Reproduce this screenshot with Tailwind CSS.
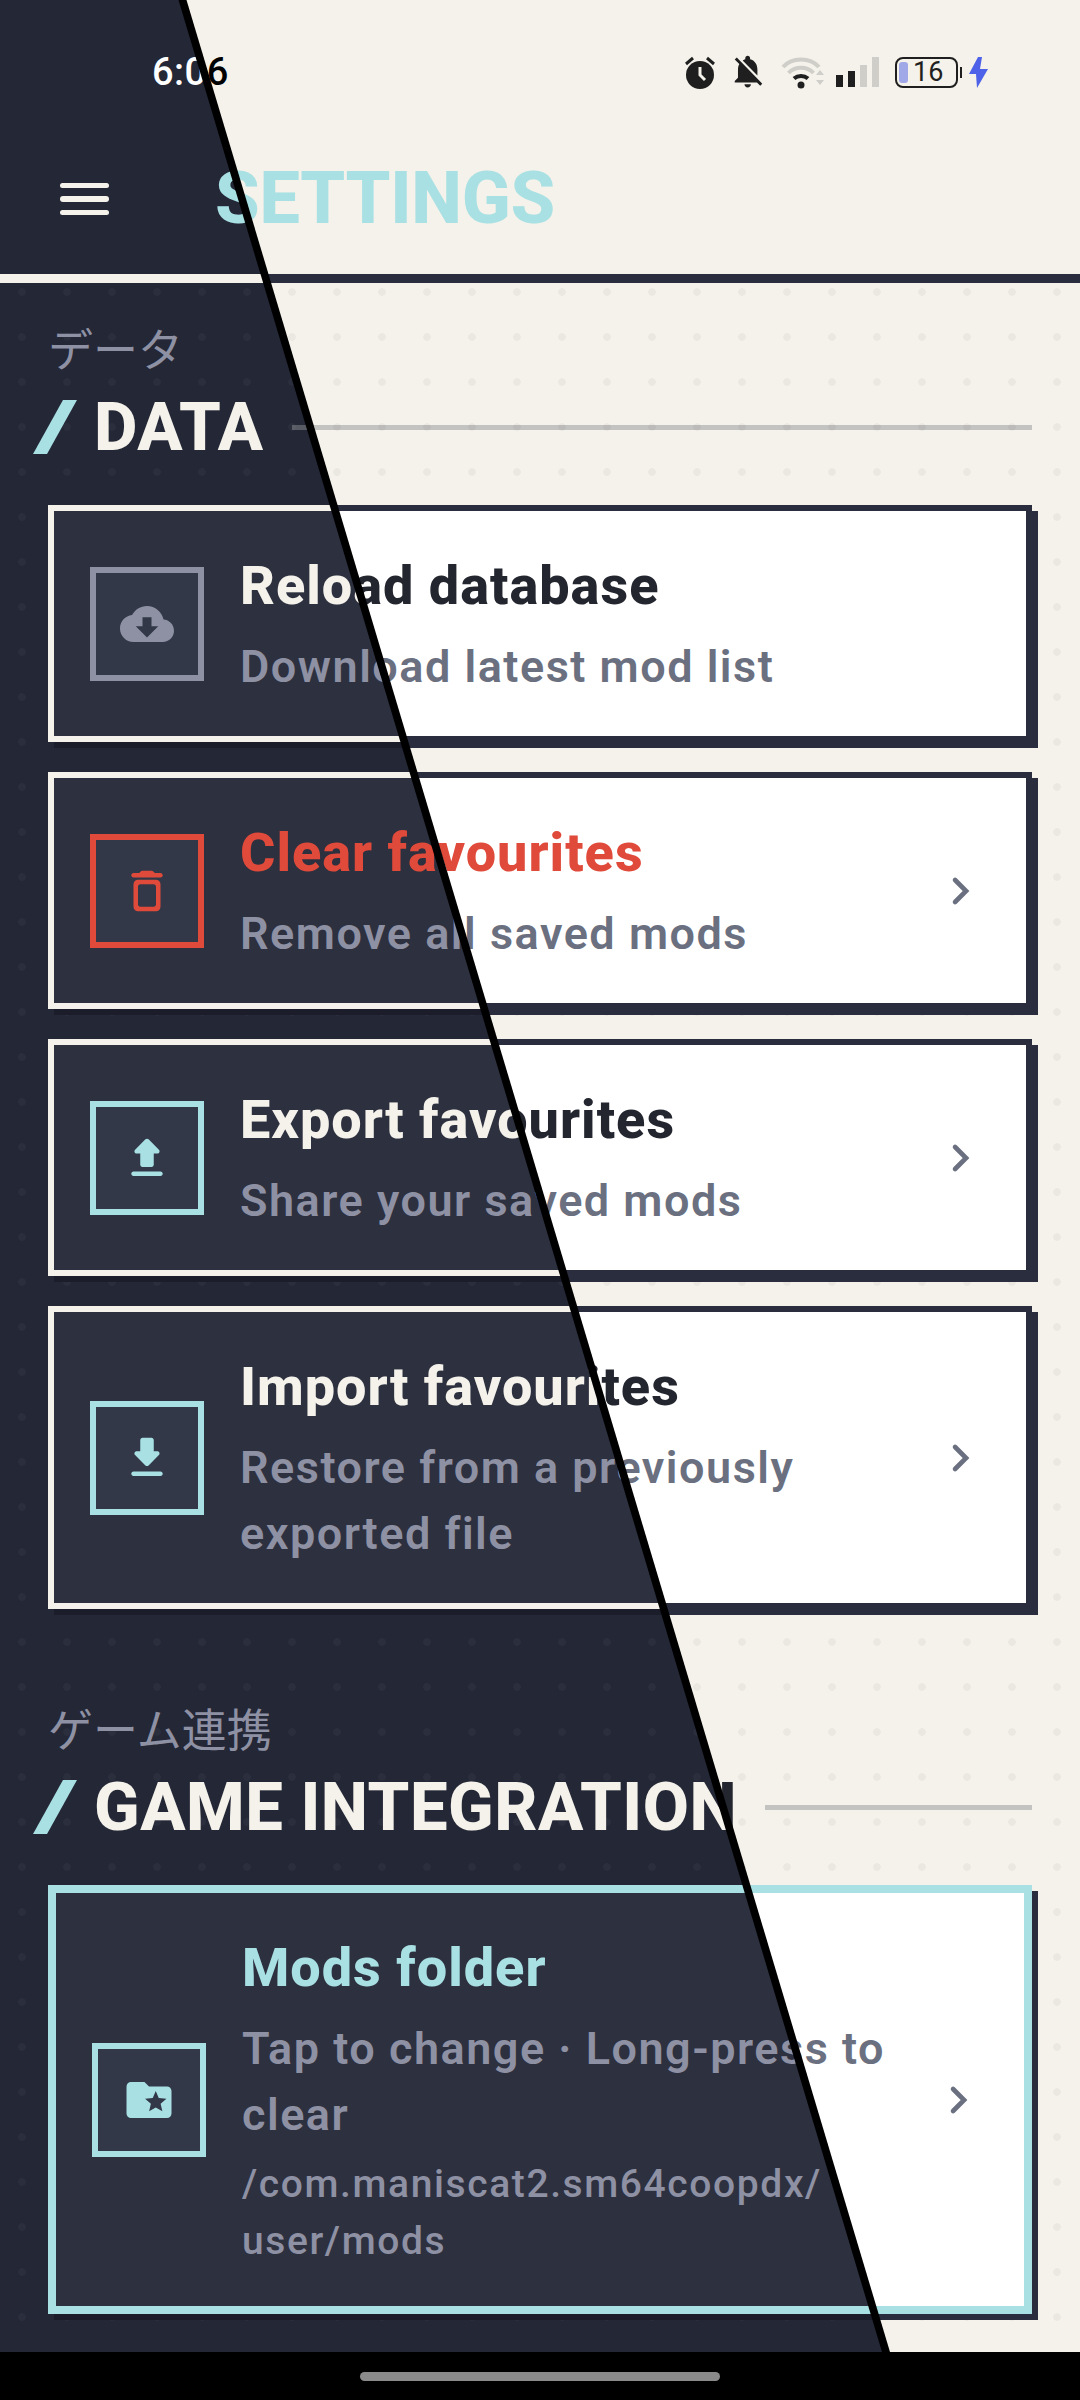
<!DOCTYPE html>
<html lang="en">
  <head>
    <meta charset="UTF-8" />
    <meta name="viewport" content="width=device-width, initial-scale=1.0" />
    <title>Settings</title>
    <script src="https://cdn.jsdelivr.net/npm/@tailwindcss/browser@4"></script>
  </head>
  <body class="bg-black">
    <div class="flex h-[2400px] w-[1080px] flex-col overflow-hidden [font-family:Roboto,'Noto_Sans_CJK_JP',sans-serif]">
      <div class="relative h-[2352px] w-full overflow-hidden">
        <!-- both themes get the same screen, the dark one is cut along the wipe -->
        <div
          data-screen
          class="absolute inset-0 [--page:#f4f2ea] [--dot:#eae8e1] [--card:#ffffff] [--edge:#2a2d3e] [--shadow:#2a2d3e] [--ink:#23262f] [--sub:#6b7080] [--box:#f4f2ea] [--rule:#2a2d3e3d] [--status:#000000]"
        ></div>
        <div
          data-screen
          class="absolute inset-0 [clip-path:polygon(0_0,182.5px_0,886px_2352px,0_2352px)] [--page:#242736] [--dot:#2b2e3d] [--card:#2d303f] [--edge:#f4f2ea] [--shadow:#1b1d2b] [--ink:#f4f2ea] [--sub:#8e91a3] [--box:#323848] [--rule:#f4f2ea40] [--status:#ffffff]"
        ></div>
        <!-- wipe edge -->
        <svg class="absolute inset-0" width="1080" height="2352" viewBox="0 0 1080 2352">
          <polygon points="178.5,0 186.5,0 890,2352 882,2352" fill="#000" />
        </svg>
      </div>
      <!-- gesture bar -->
      <div class="flex h-12 items-center justify-center bg-black">
        <div class="h-[9px] w-[360px] rounded-full bg-[#8a8a8a]"></div>
      </div>
    </div>

    <template id="screen">
      <div class="flex h-full flex-col bg-[var(--page)]">
        <header class="h-[283px] shrink-0 border-b-[9px] border-[var(--edge)]">
          <div class="flex h-[124px] items-start justify-between pt-[50px] pr-[92px] pl-[152px] text-[var(--status)]">
            <span class="text-[38px] leading-[44px] font-medium tracking-[0.5px]">6:06</span>
            <div class="mt-[5px] flex items-center text-[#1f1f1f]">
              <svg width="32" height="33" viewBox="0 0 32 33">
                <circle cx="16" cy="19" r="14" fill="currentColor" />
                <path d="M16 11v8l5 5" fill="none" stroke="#f4f2ea" stroke-width="3" />
                <path d="M2 8l7-6M30 8l-7-6" fill="none" stroke="currentColor" stroke-width="3" />
              </svg>
              <svg class="ml-[17px]" width="31" height="34" viewBox="3.500 2 18 21" fill="currentColor">
                <path d="M20 18.69L7.84 6.14 5.27 3.49 4 4.76l2.8 2.8v.01c-.52.99-.8 2.16-.8 3.42v5l-2 2v1h13.73l2 2L21 19.72l-1-1.03zM12 22c1.11 0 2-.89 2-2h-4c0 1.11.89 2 2 2zm6-7.32V11c0-3.08-1.64-5.64-4.5-6.32V4c0-.83-.67-1.5-1.5-1.5s-1.5.67-1.5 1.5v.68c-.15.03-.29.08-.42.12-.1.03-.2.07-.3.11h-.01c-.2.08-.4.18-.59.28-.1.05-.2.11-.3.17L18 14.68z" />
              </svg>
              <svg class="ml-[17px]" width="43" height="33" viewBox="0 0 43 33" fill="none">
                <path d="M2 11C11 1 29 1 38 11" stroke="#cfcec8" stroke-width="4" />
                <path d="M7.5 17C14 10 26 10 32.5 17" stroke="#cfcec8" stroke-width="4" />
                <path d="M13 22.500C17 19 23 19 27 22.500" stroke="currentColor" stroke-width="4" />
                <circle cx="20" cy="29" r="3.500" fill="currentColor" />
                <path d="M35 19l4-5 4 5zM35 24l4 5 4-5z" fill="#cfcec8" />
              </svg>
              <div class="ml-[12px] flex h-[30px] items-end gap-[5px]">
                <div class="h-[12px] w-[7px] bg-current"></div>
                <div class="h-[16px] w-[7px] bg-current"></div>
                <div class="h-[22px] w-[7px] bg-[#cfcec8]"></div>
                <div class="h-[30px] w-[7px] bg-[#cfcec8]"></div>
              </div>
              <div class="ml-[16px] flex h-[31px] w-[63px] items-center gap-[5px] rounded-[8px] border-[2.5px] border-current px-[2px]">
                <div class="h-[21px] w-[9px] rounded-[3px] bg-[#a0a8e8]"></div>
                <span class="text-[27px] leading-none font-normal">16</span>
              </div>
              <div class="ml-[2px] h-[11px] w-[2px] bg-current"></div>
              <svg class="ml-[7px]" width="19" height="31" viewBox="0 0 19 31">
                <polygon points="9,0 0,17 7,17 8,31 19,12 11,12 13,0" fill="#4d62e8" />
              </svg>
            </div>
          </div>
          <div class="flex h-[150px] items-center gap-[106px] pl-[60px]">
            <div class="flex w-[49px] flex-col gap-[8px]">
              <div class="h-[5.5px] rounded-full bg-[#f4f2ea]"></div>
              <div class="h-[5.5px] rounded-full bg-[#f4f2ea]"></div>
              <div class="h-[5.5px] rounded-full bg-[#f4f2ea]"></div>
            </div>
            <h1 class="text-[72px] leading-none font-extrabold tracking-[-0.3px] text-[#a8e0e3]">SETTINGS</h1>
          </div>
        </header>

        <main class="flex-1 bg-[radial-gradient(circle_at_22px_9px,var(--dot)_3.5px,transparent_4px)] bg-[size:45px_45px] px-12 pt-[39px]">
          <section>
            <p class="text-[45px] leading-[60px] text-[var(--sub)]">データ</p>
            <div class="mt-[15px] flex h-[60px] items-center">
              <div class="h-[54px] w-[14px] -skew-x-[29deg] bg-[#a8e0e3]"></div>
              <h2 class="ml-[32px] text-[67px] leading-none font-extrabold tracking-[0.5px] text-[var(--ink)]">DATA</h2>
              <div class="ml-[28px] h-[5px] flex-1 bg-[var(--rule)]"></div>
            </div>
            <div class="mt-[48px] flex flex-col gap-[30px]">
              <div class="flex items-center gap-9 border-[6px] border-[var(--edge)] bg-[var(--card)] p-9 shadow-[6px_6px_0_var(--shadow)]">
                <div class="flex h-[114px] w-[114px] shrink-0 items-center justify-center border-[6px] border-[#8e91a3] bg-[var(--box)] text-[#8e91a3]">
                  <svg width="54" height="54" viewBox="0 0 24 24" fill="currentColor">
                    <path d="M19.35 10.04C18.67 6.59 15.64 4 12 4 9.11 4 6.6 5.64 5.35 8.04 2.34 8.36 0 10.91 0 14c0 3.31 2.69 6 6 6h13c2.76 0 5-2.24 5-5 0-2.64-2.05-4.78-4.65-4.96zM17 13l-5 5-5-5h3V9h4v4h3z" />
                  </svg>
                </div>
                <div class="min-w-0 flex-1">
                  <h3 class="text-[54px] leading-[78px] font-extrabold tracking-[1px] text-[var(--ink)]">Reload database</h3>
                  <p class="mt-[9px] text-[45px] leading-[66px] font-semibold tracking-[1.5px] text-[var(--sub)]">Download latest mod list</p>
                </div>
              </div>

              <div class="flex items-center gap-9 border-[6px] border-[var(--edge)] bg-[var(--card)] p-9 shadow-[6px_6px_0_var(--shadow)]">
                <div class="flex h-[114px] w-[114px] shrink-0 items-center justify-center border-[6px] border-[#e04a3a] bg-[var(--box)] text-[#e04a3a]">
                  <svg width="54" height="54" viewBox="0 0 24 24" fill="currentColor">
                    <path d="M6 19c0 1.100.9 2 2 2h8c1.100 0 2-.9 2-2V9c0-1.100-.9-2-2-2H8c-1.100 0-2 .9-2 2v10zM9 9h6c.55 0 1 .45 1 1v8c0 .55-.45 1-1 1H9c-.55 0-1-.45-1-1v-8c0-.55.45-1 1-1zm6.500-5l-.71-.71c-.18-.18-.44-.29-.7-.29H9.910c-.26 0-.52.11-.7.29L8.500 4H6c-.55 0-1 .45-1 1s.45 1 1 1h12c.55 0 1-.45 1-1s-.45-1-1-1h-2.500z" />
                  </svg>
                </div>
                <div class="min-w-0 flex-1">
                  <h3 class="text-[54px] leading-[78px] font-extrabold tracking-[1px] text-[#e04a3a]">Clear favourites</h3>
                  <p class="mt-[9px] text-[45px] leading-[66px] font-semibold tracking-[1.5px] text-[var(--sub)]">Remove all saved mods</p>
                </div>
                <svg class="shrink-0 text-[var(--sub)]" width="66" height="66" viewBox="0 0 24 24" fill="none">
                  <path d="M11.300 8l4 4-4 4" stroke="currentColor" stroke-width="1.700" stroke-linecap="round" />
                </svg>
              </div>

              <div class="flex items-center gap-9 border-[6px] border-[var(--edge)] bg-[var(--card)] p-9 shadow-[6px_6px_0_var(--shadow)]">
                <div class="flex h-[114px] w-[114px] shrink-0 items-center justify-center border-[6px] border-[#a8e0e3] bg-[var(--box)] text-[#a8e0e3]">
                  <svg width="54" height="54" viewBox="0 0 24 24" fill="currentColor">
                    <path d="M10 16h4c.55 0 1-.45 1-1v-5h1.590c.89 0 1.340-1.080.71-1.710L12.710 3.700c-.39-.39-1.020-.39-1.410 0L6.710 8.290c-.63.63-.19 1.710.7 1.710H9v5c0 .55.45 1 1 1zm-4 2h12c.55 0 1 .45 1 1s-.45 1-1 1H6c-.55 0-1-.45-1-1s.45-1 1-1z" />
                  </svg>
                </div>
                <div class="min-w-0 flex-1">
                  <h3 class="text-[54px] leading-[78px] font-extrabold tracking-[1px] text-[var(--ink)]">Export favourites</h3>
                  <p class="mt-[9px] text-[45px] leading-[66px] font-semibold tracking-[1.5px] text-[var(--sub)]">Share your saved mods</p>
                </div>
                <svg class="shrink-0 text-[var(--sub)]" width="66" height="66" viewBox="0 0 24 24" fill="none">
                  <path d="M11.300 8l4 4-4 4" stroke="currentColor" stroke-width="1.700" stroke-linecap="round" />
                </svg>
              </div>

              <div class="flex items-center gap-9 border-[6px] border-[var(--edge)] bg-[var(--card)] p-9 shadow-[6px_6px_0_var(--shadow)]">
                <div class="flex h-[114px] w-[114px] shrink-0 items-center justify-center border-[6px] border-[#a8e0e3] bg-[var(--box)] text-[#a8e0e3]">
                  <svg width="54" height="54" viewBox="0 0 24 24" fill="currentColor">
                    <path d="M16.590 9H15V4c0-.55-.45-1-1-1h-4c-.55 0-1 .45-1 1v5H7.410c-.89 0-1.340 1.080-.71 1.710l4.590 4.590c.39.39 1.020.39 1.410 0l4.590-4.590c.63-.63.19-1.710-.7-1.710zM5 19c0 .55.45 1 1 1h12c.55 0 1-.45 1-1s-.45-1-1-1H6c-.55 0-1 .45-1 1z" />
                  </svg>
                </div>
                <div class="min-w-0 flex-1">
                  <h3 class="text-[54px] leading-[78px] font-extrabold tracking-[1px] text-[var(--ink)]">Import favourites</h3>
                  <p class="mt-[9px] text-[45px] leading-[66px] font-semibold tracking-[1.5px] text-[var(--sub)]">Restore from a previously exported file</p>
                </div>
                <svg class="shrink-0 text-[var(--sub)]" width="66" height="66" viewBox="0 0 24 24" fill="none">
                  <path d="M11.300 8l4 4-4 4" stroke="currentColor" stroke-width="1.700" stroke-linecap="round" />
                </svg>
              </div>
            </div>
          </section>

          <section class="mt-[93px]">
            <p class="text-[45px] leading-[60px] text-[var(--sub)]">ゲーム連携</p>
            <div class="mt-[15px] flex h-[60px] items-center">
              <div class="h-[54px] w-[14px] -skew-x-[29deg] bg-[#a8e0e3]"></div>
              <h2 class="ml-[32px] text-[67px] leading-none font-extrabold tracking-[0.5px] text-[var(--ink)]">GAME INTEGRATION</h2>
              <div class="ml-[28px] h-[5px] flex-1 bg-[var(--rule)]"></div>
            </div>
            <div class="mt-[48px] flex items-center gap-9 border-[8px] border-[#a8e0e3] bg-[var(--card)] p-9 shadow-[6px_6px_0_var(--shadow)]">
              <div class="flex h-[114px] w-[114px] shrink-0 items-center justify-center border-[6px] border-[#a8e0e3] bg-[var(--box)] text-[#a8e0e3]">
                <svg width="54" height="54" viewBox="0 0 24 24" fill="currentColor">
                  <path d="M20 6h-8l-2-2H4c-1.100 0-1.990.9-1.990 2L2 18c0 1.100.9 2 2 2h16c1.100 0 2-.9 2-2V8c0-1.100-.9-2-2-2zm-2.060 11L15 15.280 12.060 17l.78-3.330-2.590-2.240 3.410-.29L15 8l1.340 3.140 3.410.29-2.590 2.240.78 3.330z" />
                </svg>
              </div>
              <div class="min-w-0 flex-1">
                <h3 class="text-[54px] leading-[78px] font-extrabold tracking-[1px] text-[#a8e0e3]">Mods folder</h3>
                <p class="mt-[9px] text-[45px] leading-[66px] font-semibold tracking-[1.5px] text-[var(--sub)]">Tap to change · Long-press to clear</p>
                <p class="mt-[8px] text-[39px] leading-[57px] font-medium tracking-[1.6px] text-[var(--sub)]">/com.maniscat2.sm64coopdx/<br />user/mods</p>
              </div>
              <svg class="shrink-0 text-[var(--sub)]" width="66" height="66" viewBox="0 0 24 24" fill="none">
                <path d="M11.300 8l4 4-4 4" stroke="currentColor" stroke-width="1.700" stroke-linecap="round" />
              </svg>
            </div>
          </section>
        </main>
      </div>
    </template>

    <script>
      // stamp the settings screen into each theme layer
      const template = document.getElementById("screen");
      document.querySelectorAll("[data-screen]").forEach((layer) => {
        layer.appendChild(template.content.cloneNode(true));
      });
    </script>
  </body>
</html>
